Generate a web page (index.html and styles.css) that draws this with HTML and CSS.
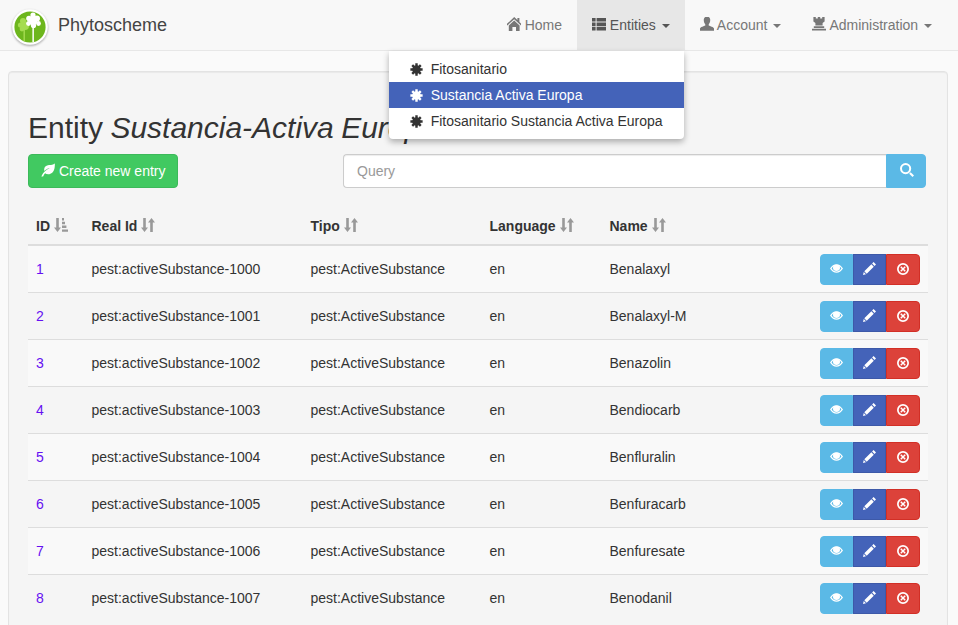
FILE: index.html
```html
<!DOCTYPE html>
<html lang="en">
<head>
    <meta charset="UTF-8" />
    <title>Phytoscheme</title>
    <link rel="stylesheet" href="styles.css">
</head>
<body>
    <svg class="sprite" width="0" height="0">
        <symbol id="i-home" viewBox="0 0 14 14"><path d="M7.2 0 L10.4 3 V1 H12.4 V4.9 L15 7.4 L14 8.4 L7.2 2.2 L.4 8.4 L-.6 7.4 Z M1.8 8.4 L7.2 3.6 L12.6 8.4 V14 H9 V10 H5.4 V14 H1.8 Z" /></symbol>
        <symbol id="i-list" viewBox="0 0 14 14"><path d="M0 1 H3.6 V4.6 H0 Z M4.6 1 H14 V4.6 H4.6 Z M0 5.4 H3.6 V9 H0 Z M4.6 5.4 H14 V9 H4.6 Z M0 9.8 H3.6 V13.4 H0 Z M4.6 9.8 H14 V13.4 H4.6 Z"/></symbol>
        <symbol id="i-user" viewBox="0 0 14 14"><path d="M7 -.4 C9.3 -.4 10.4 1.3 10.2 3.6 C10.1 5.2 9.5 6.6 8.7 7.4 V8.6 C10.3 9.4 13.6 10 14 11.6 V13.8 H0 V11.6 C.4 10 3.7 9.4 5.3 8.6 V7.4 C4.5 6.6 3.9 5.2 3.8 3.6 C3.6 1.3 4.7 -.4 7 -.4 Z"/></symbol>
        <symbol id="i-tower" viewBox="0 0 14 14"><path d="M1.4 -.6 H3.8 V1.4 H5.8 V-.6 H8.2 V1.4 H10.2 V-.6 H12.6 V4.4 L10.6 6 V8.4 H3.4 V6 L1.4 4.4 Z M1.8 9.2 H12.2 V11 H1.8 Z M0 11.8 H14 V13.6 H0 Z"/></symbol>
        <symbol id="i-star" viewBox="0 0 14 14"><g stroke="currentColor" stroke-width="2.6"><path d="M7 .4 V13.6 M.4 7 H13.6 M2.4 2.4 L11.6 11.6 M11.6 2.4 L2.4 11.6"/></g><circle cx="7" cy="7" r="4.6"/></symbol>
        <symbol id="i-leaf" viewBox="0 0 16 16"><path d="M15.8 .6 C16 6 15 11.4 9.6 12.8 C7.6 13.2 5.8 12.6 4.6 11.8 C3.8 12.8 3 14 2.4 15.4 L.4 15.4 C1.2 13.2 3.2 10.4 5.6 8.6 C7.4 7.2 9.4 6.2 11 5.8 C8.6 6 6 7 3.8 9 C3 6.2 4.4 3.6 7 2.8 C9.6 2 13.4 2.8 15.8 .6 Z"/></symbol>
        <symbol id="i-search" viewBox="0 0 14 14"><path fill-rule="evenodd" d="M5.6 0 A5.6 5.6 0 1 1 5.6 11.2 A5.6 5.6 0 1 1 5.6 0 Z M5.6 2 A3.6 3.6 0 1 0 5.6 9.2 A3.6 3.6 0 1 0 5.6 2 Z"/><path d="M9.2 10.7 L10.7 9.2 L14 12.5 L12.5 14 Z"/></symbol>
        <symbol id="i-eye" viewBox="0 0 14 14"><path fill-rule="evenodd" d="M0 7 C1.8 4 4.4 2.4 7 2.4 C9.6 2.4 12.2 4 14 7 C12.2 10 9.6 11.6 7 11.6 C4.4 11.6 1.8 10 0 7 Z M3.7 4.6 C3.1 5.1 2.3 6 1.7 7 C3 8.9 5 10.2 7 10.2 C9 10.2 11 8.9 12.3 7 C11.7 6 10.9 5.1 10.3 4.6 C10.6 5.2 10.8 5.8 10.8 6.4 C10.8 8.4 9 9.6 7 9.6 C5 9.6 3.2 8.4 3.2 6.4 C3.2 5.8 3.4 5.2 3.7 4.6 Z"/><path d="M4.6 3.4 C6 2.8 8 2.8 9.4 3.4 C9.9 4.6 9.7 6 9 7 C8 8 6 8 5 7 C4.3 6 4.1 4.6 4.6 3.4 Z" /></symbol>
        <symbol id="i-pencil" viewBox="0 0 14 14"><path d="M11.4 0 L14 2.6 L12.4 4.2 L9.8 1.6 Z M9 2.4 L11.6 5 L4 12.6 L1.4 10 Z M.8 10.8 L3.2 13.2 L0 14 Z"/></symbol>
        <symbol id="i-remove" viewBox="0 0 14 14"><path fill-rule="evenodd" d="M7 0 A7 7 0 1 1 7 14 A7 7 0 1 1 7 0 Z M7 2 A5 5 0 1 0 7 12 A5 5 0 1 0 7 2 Z"/><path d="M5 3.8 L7 5.8 L9 3.8 L10.2 5 L8.2 7 L10.2 9 L9 10.2 L7 8.2 L5 10.2 L3.8 9 L5.8 7 L3.8 5 Z"/></symbol>
        <symbol id="i-sort" viewBox="0 0 14 14"><path d="M2.2 0 H4.8 V9.4 H7 L3.5 14 L0 9.4 H2.2 Z M9.2 14 H11.8 V4.6 H14 L10.5 0 L7 4.6 H9.2 Z"/></symbol>
        <symbol id="i-sort-attr" viewBox="0 0 14 14"><path d="M2.2 0 H4.8 V9.4 H7 L3.5 14 L0 9.4 H2.2 Z M8 0 H10 V2.4 H8 Z M8 3.8 H11 V6.2 H8 Z M8 7.6 H12.4 V10 H8 Z M8 11.4 H14 V13.8 H8 Z"/></symbol>
    </svg>

    <nav class="navbar">
        <a class="brand" href="#">
            <svg class="logo" viewBox="0 0 36 36">
                <circle cx="18" cy="18" r="17.8" fill="#fff"/>
                <circle cx="18" cy="18" r="15.6" fill="#6db61d"/>
                <g fill="#a5dc50">
                    <circle cx="11" cy="12" r="3"/>
                    <circle cx="8.5" cy="16" r="2.6"/>
                    <circle cx="13" cy="17" r="4"/>
                    <circle cx="10" cy="20" r="2.4"/>
                    <rect x="11.5" y="18" width="1.4" height="14"/>
                </g>
                <g fill="#fff">
                    <circle cx="21" cy="6" r="2.6"/>
                    <circle cx="17" cy="9.5" r="2.8"/>
                    <circle cx="25" cy="9.5" r="3"/>
                    <circle cx="21" cy="12" r="4.4"/>
                    <circle cx="26.5" cy="14.5" r="2.4"/>
                    <circle cx="16.5" cy="14.5" r="2.4"/>
                    <circle cx="21.5" cy="16.5" r="2.6"/>
                    <rect x="20.4" y="16" width="1.5" height="17"/>
                </g>
            </svg>
            Phytoscheme
        </a>
        <ul class="nav">
            <li><a href="#"><svg class="icon"><use href="#i-home"/></svg> Home</a></li>
            <li class="active">
                <a href="#"><svg class="icon"><use href="#i-list"/></svg> Entities <span class="caret"></span></a>
                <ul class="dropdown">
                    <li><a href="#"><svg class="icon"><use href="#i-star"/></svg>Fitosanitario</a></li>
                    <li class="selected"><a href="#"><svg class="icon"><use href="#i-star"/></svg>Sustancia Activa Europa</a></li>
                    <li><a href="#"><svg class="icon"><use href="#i-star"/></svg>Fitosanitario Sustancia Activa Europa</a></li>
                </ul>
            </li>
            <li><a href="#"><svg class="icon"><use href="#i-user"/></svg> Account <span class="caret"></span></a></li>
            <li><a href="#"><svg class="icon"><use href="#i-tower"/></svg> Administration <span class="caret"></span></a></li>
        </ul>
    </nav>

    <main class="well">
        <h1>Entity <em>Sustancia-Activa Europa</em></h1>
        <div class="toolbar">
            <a class="btn btn-create" href="#"><svg class="icon"><use href="#i-leaf"/></svg> Create new entry</a>
            <form class="search">
                <input type="text" placeholder="Query" />
                <button type="button"><svg class="icon"><use href="#i-search"/></svg></button>
            </form>
        </div>

        <table>
            <colgroup>
                <col class="col-id"><col class="col-real"><col class="col-tipo"><col class="col-lang"><col class="col-name"><col>
            </colgroup>
            <thead>
                <tr>
                    <th>ID <svg class="icon sort"><use href="#i-sort-attr"/></svg></th>
                    <th>Real Id <svg class="icon sort"><use href="#i-sort"/></svg></th>
                    <th>Tipo <svg class="icon sort"><use href="#i-sort"/></svg></th>
                    <th>Language <svg class="icon sort"><use href="#i-sort"/></svg></th>
                    <th>Name <svg class="icon sort"><use href="#i-sort"/></svg></th>
                    <th></th>
                </tr>
            </thead>
            <tbody id="rows"></tbody>
        </table>
    </main>

    <script>
        const names = ['Benalaxyl', 'Benalaxyl-M', 'Benazolin', 'Bendiocarb', 'Benfluralin', 'Benfuracarb', 'Benfuresate', 'Benodanil'];
        const rows = document.getElementById('rows');

        names.forEach((name, i) => {
            const tr = document.createElement('tr');
            tr.innerHTML = `
                <td><a href="#">${i + 1}</a></td>
                <td>pest:activeSubstance-${1000 + i}</td>
                <td>pest:ActiveSubstance</td>
                <td>en</td>
                <td>${name}</td>
                <td class="actions"><div class="btn-group">
                    <a class="view" href="#"><svg class="icon"><use href="#i-eye"/></svg></a>
                    <a class="edit" href="#"><svg class="icon"><use href="#i-pencil"/></svg></a>
                    <a class="remove" href="#"><svg class="icon"><use href="#i-remove"/></svg></a>
                </div></td>`;
            rows.appendChild(tr);
        });
    </script>
</body>
</html>
```

FILE: styles.css
```css
html, body {
    height: 100%;
    overflow: hidden;
}

body {
    margin: 0;
    background-color: #fafafa;
    color: #333;
    font-family: "Liberation Sans", Arial, sans-serif;
    font-size: 14px;
    line-height: 20px;
}

a {
    color: inherit;
    text-decoration: none;
}

.sprite {
    position: absolute;
}

.icon {
    display: inline-block;
    width: 14px;
    height: 14px;
    fill: currentColor;
    overflow: visible;
    vertical-align: -1px;
}

/* Top bar */
.navbar {
    display: flex;
    justify-content: space-between;
    height: 50px;
    padding: 0 11px 0 12px;
    background-color: #f8f8f8;
    border-bottom: 1px solid #e7e7e7;
}

.brand {
    display: flex;
    align-items: center;
    gap: 10px;
    color: #444;
    font-size: 18px;
}

.logo {
    width: 36px;
    height: 36px;
    margin-top: 4px;
    filter: drop-shadow(0 1px 1px rgba(0, 0, 0, 0.35));
}

.nav {
    display: flex;
    margin: 0;
    padding: 0;
    list-style: none;
}

.nav > li {
    position: relative;
}

.nav > li:last-child {
    margin-left: 1px;
}

.nav > li > a {
    display: block;
    padding: 15px;
    color: #777;
}

.nav > .active > a {
    background-color: #e7e7e7;
    color: #555;
}

.caret {
    display: inline-block;
    margin-left: 2px;
    vertical-align: middle;
    border-top: 4px solid;
    border-left: 4px solid transparent;
    border-right: 4px solid transparent;
}

.dropdown {
    position: absolute;
    top: 51px;
    right: 1px;
    z-index: 10;
    width: 295px;
    margin: 0;
    padding: 5px 0;
    list-style: none;
    background-color: #fff;
    border-radius: 0 0 4px 4px;
    box-shadow: 0 3px 6px rgba(0, 0, 0, 0.3);
}

.dropdown a {
    display: flex;
    align-items: center;
    gap: 8px;
    height: 26px;
    padding: 0 20px 0 21px;
    white-space: nowrap;
}

.dropdown .icon {
    width: 13px;
    height: 13px;
}

.dropdown .selected a {
    background-color: #4463b9;
    color: #fff;
}

/* Main panel */
.well {
    height: 600px;
    margin: 20px 10px 0 8px;
    padding: 19px;
    background-color: #f5f5f5;
    border: 1px solid #e3e3e3;
    border-radius: 4px;
    box-shadow: inset 0 1px 1px rgba(0, 0, 0, 0.05);
}

h1 {
    margin: 20px 0 10px;
    font-size: 30px;
    font-weight: 400;
    line-height: 33px;
    word-spacing: -1px;
}

.toolbar {
    display: flex;
    justify-content: space-between;
    width: 898px;
    margin-bottom: 20px;
}

.btn {
    display: block;
    box-sizing: border-box;
    height: 34px;
    padding: 6px 12px;
    border: 1px solid #3cb95a;
    border-radius: 4px;
}

.btn-create {
    width: 150px;
    white-space: nowrap;
    background-color: #41c961;
    color: #fff;
}

.search {
    display: flex;
    width: 583px;
    margin: 0;
}

.search input {
    flex: 1;
    box-sizing: border-box;
    height: 34px;
    padding: 6px 13px;
    font: inherit;
    color: #555;
    background-color: #fff;
    border: 1px solid #ccc;
    border-right: none;
    border-radius: 4px 0 0 4px;
    box-shadow: inset 0 1px 1px rgba(0, 0, 0, 0.075);
}

.search input::placeholder {
    color: #999;
}

.search button {
    width: 40px;
    height: 34px;
    padding: 0 0 0 1px;
    color: #fff;
    background-color: #5bb9e6;
    border: 1px solid #5bb9e6;
    border-radius: 0 4px 4px 0;
}

/* Table */
table {
    width: 900px;
    table-layout: fixed;
    border-collapse: collapse;
}

.col-id { width: 55.5px; }
.col-real { width: 219px; }
.col-tipo { width: 179px; }
.col-lang { width: 120px; }
.col-name { width: 150px; }

th {
    padding: 8px;
    text-align: left;
    border-bottom: 2px solid #ddd;
    white-space: nowrap;
}

td {
    height: 30px;
    padding: 8px;
    border-top: 1px solid #ddd;
}

thead tr th:first-child,
tbody tr:first-child td {
    border-top: none;
}

tbody tr:nth-child(odd) {
    background-color: #f9f9f9;
}

td a {
    color: #6610f2;
}

.sort {
    color: #999;
}

.actions {
    padding-top: 0;
    padding-bottom: 0;
    text-align: right;
}

.btn-group {
    display: inline-flex;
    vertical-align: middle;
}

.btn-group a {
    display: flex;
    align-items: center;
    justify-content: center;
    box-sizing: border-box;
    width: 33px;
    height: 31px;
    color: #fff;
    border: 1px solid;
}

.btn-group .icon {
    width: 13px;
    height: 13px;
    margin-top: -2px;
}

.btn-group .remove .icon {
    width: 12px;
    height: 12px;
    margin: -1px 1px 0 0;
}

.view {
    background-color: #5bb9e6;
    border-color: #5bb9e6 !important;
    border-radius: 4px 0 0 4px;
}

.edit {
    background-color: #4463b9;
    border-color: #3d59a8 !important;
}

.remove {
    width: 34px !important;
    background-color: #dc423a;
    border-color: #d22f26 !important;
    border-radius: 0 4px 4px 0;
}
```
